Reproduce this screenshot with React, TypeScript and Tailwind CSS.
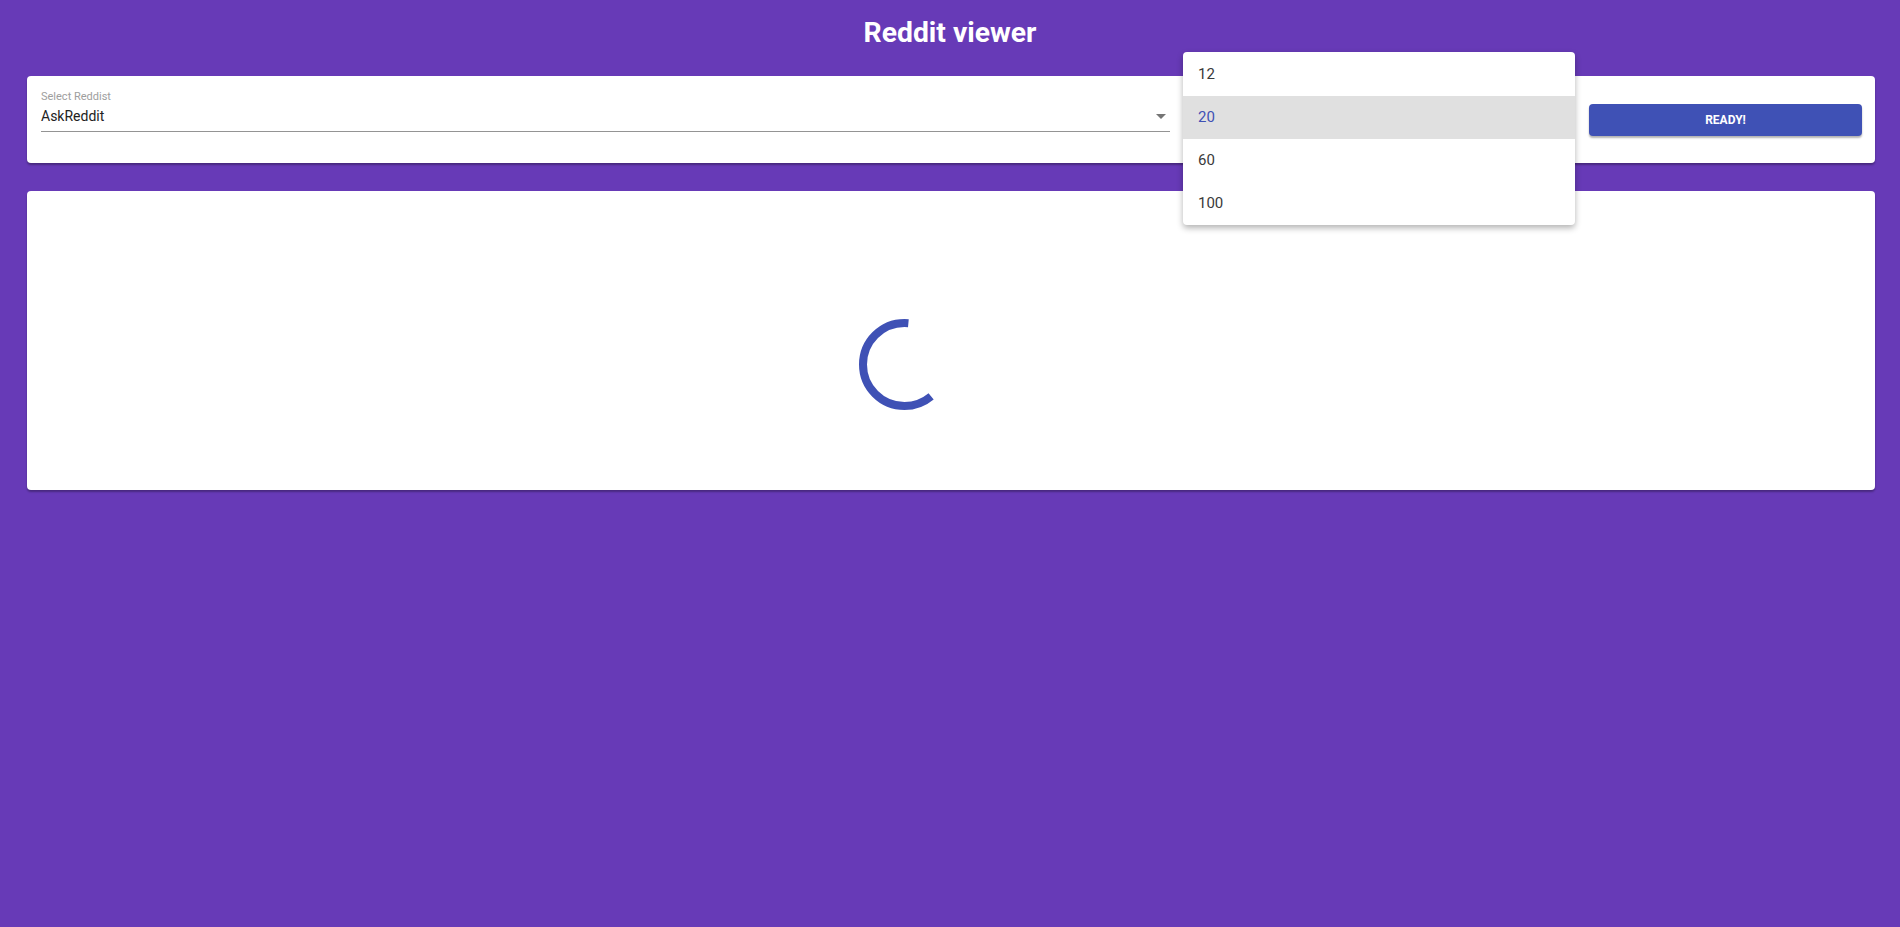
import React from 'react';

const sizes = ['12', '20', '60', '100'];

// loading spinner, a fixed arc like the frozen MUI one
const Spinner = () => {
  const r = 41.5;
  const c = 2 * Math.PI * r;
  const arc = (225 / 360) * c;
  return (
    <svg width="91" height="91" viewBox="0 0 91 91">
      <circle
        cx="45.5"
        cy="45.5"
        r={r}
        fill="none"
        stroke="#3f51b5"
        strokeWidth="8"
        strokeDasharray={`${arc} ${c}`}
        strokeDashoffset={-(50 / 360) * c}
      />
    </svg>
  );
};

const App = () => {
  return (
    <div className="relative min-h-[927px] w-full bg-[#673ab7] font-['Roboto',sans-serif]">
      {/* Header */}
      <h1 className="pt-[17px] text-center text-[28.3px] leading-[32px] font-bold text-white">
        Reddit viewer
      </h1>

      <div className="flex flex-col gap-[28px] pl-[27px] pr-[25px] pt-[27px]">
        {/* Controls */}
        <div className="flex h-[87px] items-center rounded-[4px] bg-white pl-[14px] pr-[13px] shadow-[0_2px_2px_rgba(0,0,0,0.3)]">
          <div className="w-[1129px] self-start pt-[14px]">
            <div className="text-[11px] leading-[13px] text-[#9e9e9e]">Select Reddist</div>
            <div className="mt-[4px] flex items-center justify-between border-b border-[#949494] pb-[5px]">
              <span className="text-[14px] leading-[19px] text-[#222222]">AskReddit</span>
              <svg width="10" height="5" viewBox="0 0 10 5" className="mr-[4px]">
                <path d="M0 0h10L5 5z" fill="#757575" />
              </svg>
            </div>
          </div>
          <div className="flex-1" />
          <button className="h-[32px] w-[273px] rounded-[4px] bg-[#3f51b5] text-[12px] font-bold text-white shadow-[0_2px_2px_rgba(0,0,0,0.3)]">
            READY!
          </button>
        </div>

        {/* Results */}
        <div className="rounded-[4px] bg-white pb-[80px] pl-[832px] pt-[128px] shadow-[0_2px_2px_rgba(0,0,0,0.3)]">
          <Spinner />
        </div>
      </div>

      {/* Open menu of the count select */}
      <ul className="absolute left-[1183px] top-[52px] w-[392px] overflow-hidden rounded-[4px] bg-white pt-[1px] shadow-[0_3px_6px_rgba(0,0,0,0.3)]">
        {sizes.map(size => (
          <li
            key={size}
            className={
              size === '20'
                ? 'flex h-[43px] items-center bg-[#e0e0e0] pl-[15px] text-[15px] text-[#3f51b5]'
                : 'flex h-[43px] items-center pl-[15px] text-[15px] text-[#3a3a3a]'
            }
          >
            {size}
          </li>
        ))}
      </ul>
    </div>
  );
};

export default App;
